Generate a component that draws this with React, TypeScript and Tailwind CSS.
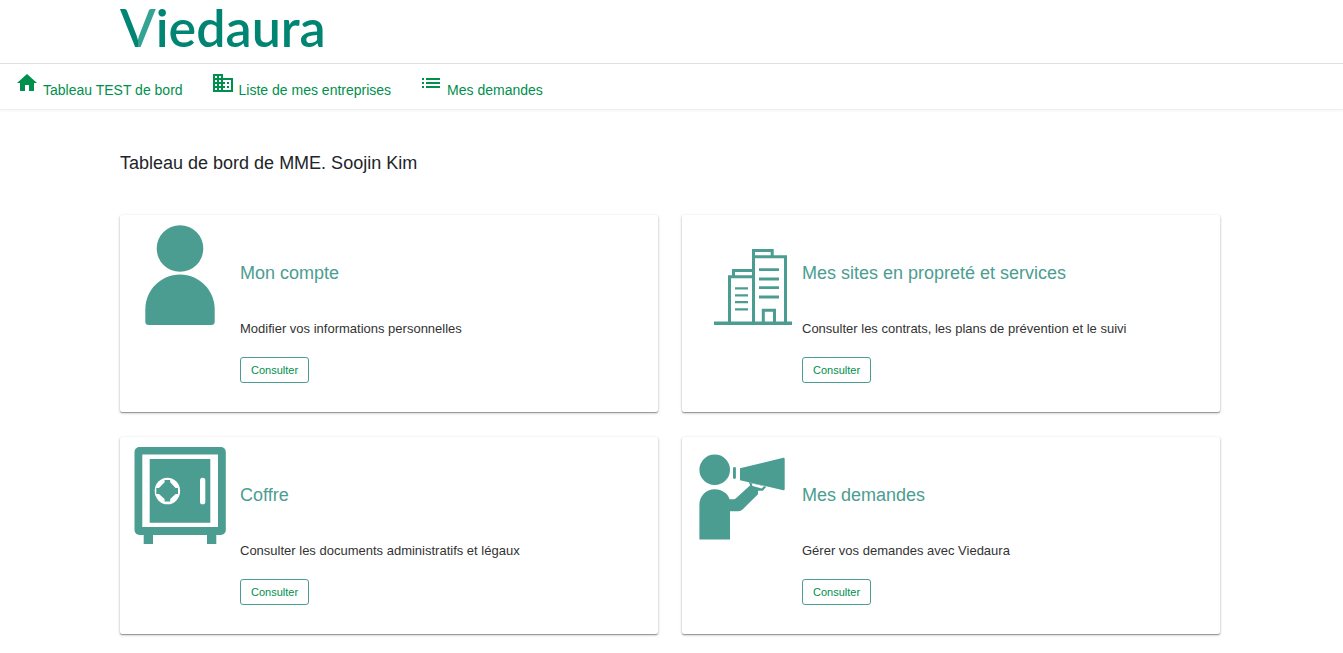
import React from "react";
import { MdDomain, MdHome, MdList } from "react-icons/md";

function PersonIcon() {
  return (
    <svg width="120" height="110" viewBox="0 0 120 110" fill="currentColor" aria-hidden="true">
      <circle cx="60" cy="33.5" r="23.3" />
      <path d="M25.3 106.500V94.500C25.300 75 41 59.600 60 59.600S94.700 75 94.700 94.500V106.500Q94.700 110 91.200 110H28.800Q25.300 110 25.300 106.500Z" />
    </svg>
  );
}

function BuildingsIcon() {
  return (
    <svg width="120" height="110" viewBox="0 0 120 110" fill="none" stroke="currentColor" strokeWidth="3" aria-hidden="true">
      <path d="M32 108.200H110" strokeWidth="3.500" />
      <path d="M71.500 108V41.700H103.500V108M71.500 42V35.500H90.200V41" />
      <path d="M47.500 108V61.800H71M51.500 62V55.400H71" />
      <path d="M77 54.700H97M77 64H97M77 72.600H97M77 82H97" strokeWidth="2.800" />
      <path d="M53 73.400H66M53 80.400H66M53 87.200H66M53 94.400H66" strokeWidth="2.300" />
      <path d="M81.300 108V95.300H92.500V108" />
    </svg>
  );
}

function SafeIcon() {
  return (
    <svg width="120" height="110" viewBox="0 0 120 110" fill="currentColor" aria-hidden="true">
      <path d="M23.700 96H33V107H23.700ZM87 96H96.300V107H87Z" />
      <rect x="14.500" y="10" width="91.300" height="88" rx="5" />
      <path d="M22.300 17.600H98V90H22.300Z" fill="white" />
      <path d="M29.700 22H90.300V85.700H29.700Z" />
      <ellipse cx="47.400" cy="54" rx="12.700" ry="13.300" fill="white" />
      <path d="M44.600 43H50.200V45.300L55.600 51H58V57H55.600L50.200 62V64.500H44.600V62L39 57H36.300V51H39L44.600 45.300Z" />
      <rect x="80" y="40.700" width="5.300" height="26.600" rx="2.600" fill="white" />
    </svg>
  );
}

function MegaphoneIcon() {
  return (
    <svg width="120" height="110" viewBox="0 0 120 110" fill="currentColor" aria-hidden="true">
      <circle cx="32.700" cy="32.800" r="15.300" />
      <path d="M17.400 102.500V67.500C17.400 59 24 52.200 32.700 52.200C40 52.200 46 56.500 47.600 62.300H51.500Q53 62.300 54 61.300L68.200 48.300L66.800 45L84.300 49.700L80.800 53.700H76V57.300L60.500 72.500Q58.800 74.300 56.500 74.300H48V102.500Z" />
      <path d="M58 31.300L101.300 20.800Q102.700 20.600 102.700 22V52Q102.700 53.500 101.300 53.200L58 43.300Z" />
      <path d="M69.500 46.300L82 49.200L79.700 51.400L70.600 48.900Z" fill="white" />
      <rect x="51" y="30" width="2.900" height="12" rx="1.400" />
    </svg>
  );
}

const links = [
  { label: "Tableau TEST de bord", Icon: MdHome },
  { label: "Liste de mes entreprises", Icon: MdDomain },
  { label: "Mes demandes", Icon: MdList },
];

const cards = [
  { title: "Mon compte", text: "Modifier vos informations personnelles", Icon: PersonIcon },
  { title: "Mes sites en propreté et services", text: "Consulter les contrats, les plans de prévention et le suivi", Icon: BuildingsIcon },
  { title: "Coffre", text: "Consulter les documents administratifs et légaux", Icon: SafeIcon },
  { title: "Mes demandes", text: "Gérer vos demandes avec Viedaura", Icon: MegaphoneIcon },
];

export default function App() {
  return (
    <div className="min-h-screen bg-white font-['Liberation_Sans',Arial,sans-serif]">
      <header>
        <div className="flex items-start border-b border-[#e0e0e0] pb-[9px] pl-[120px]">
          <a href="#accueil" className="font-[Lato,sans-serif] text-[52px] leading-[54px] font-semibold text-[#008573]">
            <span className="bg-linear-to-r from-[#008573] from-50% to-[#35a393] to-50% bg-clip-text text-transparent">V</span>iedaura
          </a>
        </div>
        <nav className="flex gap-7 border-b border-[#f0f0f0] px-[15px] pt-[7px] pb-[9px] shadow-xs">
          {links.map(({ label, Icon }) => (
            <a key={label} href="#" className="flex items-baseline gap-1 text-sm text-[#008f4c]">
              <Icon size={24} aria-hidden="true" />
              {label}
            </a>
          ))}
        </nav>
      </header>
      <main className="pt-[41px] pr-[123px] pb-[18px] pl-[120px]">
        <h1 className="text-lg leading-6 text-[#212529]">Tableau de bord de MME. Soojin Kim</h1>
        <div className="mt-10 grid grid-cols-2 gap-x-6 gap-y-[25px]">
          {cards.map(({ title, text, Icon }) => (
            <section key={title} className="flex rounded-xs bg-white pb-[29px] text-[#4c9d91] shadow-[0_1px_3px_rgba(0,0,0,0.25),0_1px_1px_rgba(0,0,0,0.3)]">
              <div className="w-[120px] shrink-0">
                <Icon />
              </div>
              <div className="flex flex-col items-start pt-[46px]">
                <h2 className="text-lg leading-6">{title}</h2>
                <p className="mt-9 text-[13px] leading-4 text-[#333333]">{text}</p>
                <button type="button" className="mt-5 h-[26px] rounded-[3px] border border-[#4c9d91] px-[10px] text-[11px] leading-4 text-[#008f4c]">
                  Consulter
                </button>
              </div>
            </section>
          ))}
        </div>
      </main>
    </div>
  );
}
